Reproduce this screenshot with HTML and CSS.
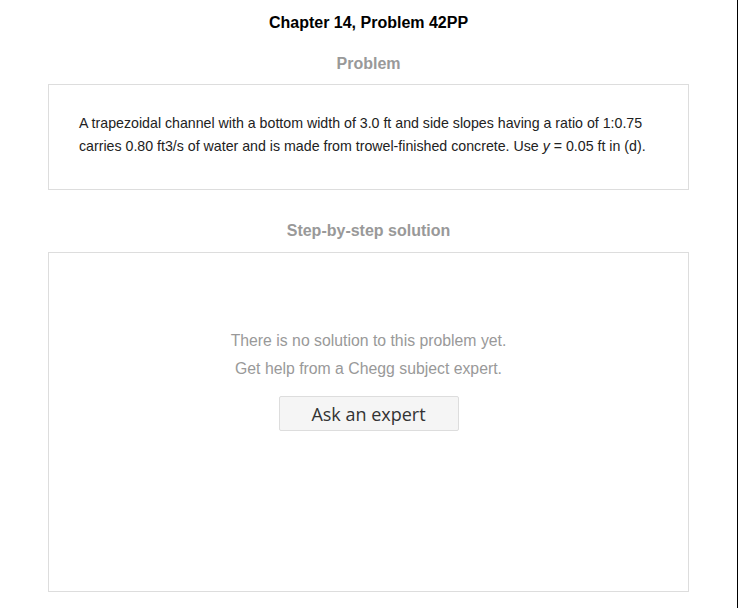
FILE: index.html
```html
<!DOCTYPE html>
<html>
<head>
<meta charset="utf-8">
<link rel="stylesheet" href="styles.css">
</head>
<body>
<div class="page">
  <h1 class="title">Chapter 14, Problem 42PP</h1>
  <h2 class="section-title">Problem</h2>
  <div class="box problem-box">
    <p class="problem-text">A trapezoidal channel with a bottom width of 3.0 ft and side slopes having a ratio of 1:0.75 carries 0.80 ft3/s of water and is made from trowel-finished concrete. Use <i>y</i> = 0.05 ft in (d).</p>
  </div>
  <h2 class="section-title step-title">Step-by-step solution</h2>
  <div class="box solution-box">
    <p class="no-solution">There is no solution to this problem yet.<br>Get help from a Chegg subject expert.</p>
    <button class="ask-btn">Ask an expert</button>
  </div>
</div>
</body>
</html>
```
FILE: styles.css
```css
html, body {
  margin: 0;
  padding: 0;
  background: #fff;
}
body {
  font-family: "Liberation Sans", Arial, sans-serif;
}
.page {
  width: 738px;
  height: 608px;
  box-sizing: border-box;
  border-right: 1px solid #000;
  padding: 13px 48px 0 48px;
  display: flex;
  flex-direction: column;
  overflow: hidden;
}
.title {
  margin: 0;
  font-size: 16px;
  font-weight: bold;
  color: #000;
  text-align: center;
  line-height: 20px;
}
.section-title {
  margin: 21px 0 0;
  font-size: 16px;
  font-weight: bold;
  color: #999;
  text-align: center;
  line-height: 20px;
}
.step-title {
  margin-top: 31px;
}
.box {
  border: 1px solid #ddd;
  margin-top: 10px;
}
.problem-box {
  height: 106px;
  box-sizing: border-box;
  padding: 27px 30px 0;
}
.problem-text {
  margin: 0;
  font-size: 14.2px;
  line-height: 23px;
  color: #222;
}
.solution-box {
  margin-top: 11px;
  height: 340px;
  box-sizing: border-box;
  padding-top: 74px;
  display: flex;
  flex-direction: column;
  align-items: center;
}
.no-solution {
  margin: 0;
  font-size: 15.8px;
  line-height: 28px;
  color: #999;
  text-align: center;
}
.ask-btn {
  margin-top: 13px;
  width: 180px;
  height: 35px;
  background: #f5f5f5;
  border: 1px solid #ddd;
  border-radius: 2px;
  font-family: "Open Sans", sans-serif;
  font-size: 18px;
  color: #333;
  padding: 0;
}
```
